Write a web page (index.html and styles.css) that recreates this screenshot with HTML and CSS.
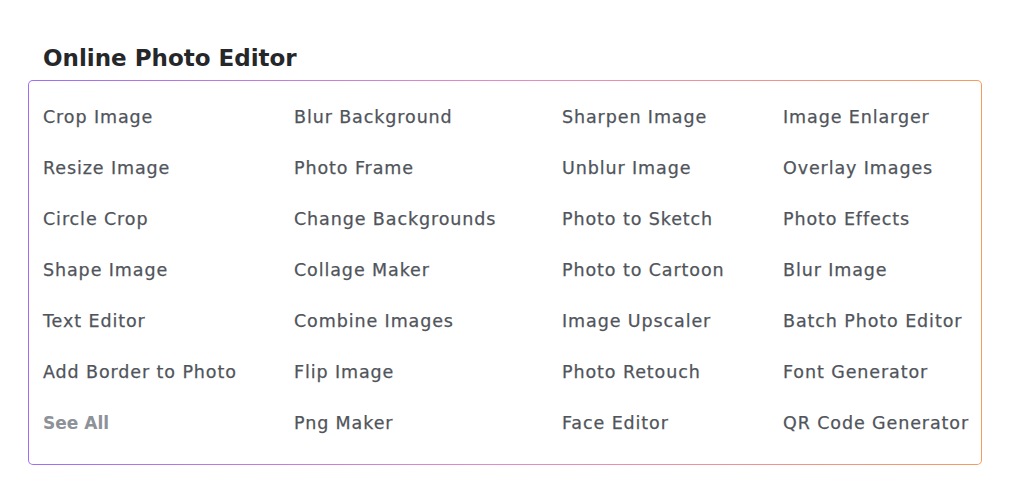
FILE: index.html
```html
<!DOCTYPE html>
<html lang="en">
<head>
    <meta charset="UTF-8">
    <meta name="viewport" content="width=device-width, initial-scale=1.0">
    <title>Online Photo Editor</title>
    <link rel="stylesheet" href="styles.css">
</head>
<body>
    <section class="tools">
        <h2 class="tools-title">Online Photo Editor</h2>

        <div class="tools-box">
            <div class="tools-grid">
                <a href="#">Crop Image</a>
                <a href="#">Blur Background</a>
                <a href="#">Sharpen Image</a>
                <a href="#">Image Enlarger</a>

                <a href="#">Resize Image</a>
                <a href="#">Photo Frame</a>
                <a href="#">Unblur Image</a>
                <a href="#">Overlay Images</a>

                <a href="#">Circle Crop</a>
                <a href="#">Change Backgrounds</a>
                <a href="#">Photo to Sketch</a>
                <a href="#">Photo Effects</a>

                <a href="#">Shape Image</a>
                <a href="#">Collage Maker</a>
                <a href="#">Photo to Cartoon</a>
                <a href="#">Blur Image</a>

                <a href="#">Text Editor</a>
                <a href="#">Combine Images</a>
                <a href="#">Image Upscaler</a>
                <a href="#">Batch Photo Editor</a>

                <a href="#">Add Border to Photo</a>
                <a href="#">Flip Image</a>
                <a href="#">Photo Retouch</a>
                <a href="#">Font Generator</a>

                <a href="#" class="see-all">See All</a>
                <a href="#">Png Maker</a>
                <a href="#">Face Editor</a>
                <a href="#">QR Code Generator</a>
            </div>
        </div>
    </section>
</body>
</html>
```

FILE: styles.css
```css
* {
    margin: 0;
    padding: 0;
    box-sizing: border-box;
}

body {
    font-family: "DejaVu Sans", "Open Sans", Arial, sans-serif;
    background-color: #fff;
}

.tools {
    width: 954px;
    margin: 0 0 0 28px;
    padding-top: 43px;
}

.tools-title {
    font-size: 23px;
    font-weight: 700;
    line-height: 30px;
    color: #25272b;
    padding-left: 15px;
    margin-bottom: 7px;
}

/* gradient border: purple -> pink -> orange */
.tools-box {
    padding: 1px;
    border-radius: 5px;
    background: linear-gradient(90deg, #a06ef4 0%, #e38bc9 50%, #f89a5e 100%);
}

.tools-grid {
    background-color: #fff;
    border-radius: 4px;
    padding: 24px 10px 29px 14px;
    display: grid;
    grid-template-columns: 251px 268px 221px 1fr;
    row-gap: 27px;
}

.tools-grid a {
    font-size: 17.5px;
    line-height: 24px;
    letter-spacing: 0.9px;
    color: #50545b;
    -webkit-text-stroke: 0.25px #50545b;
    text-decoration: none;
    white-space: nowrap;
}

.tools-grid a.see-all {
    font-size: 17px;
    color: #8d9198;
    -webkit-text-stroke: 0;
    font-weight: 700;
    letter-spacing: 0;
}
```
